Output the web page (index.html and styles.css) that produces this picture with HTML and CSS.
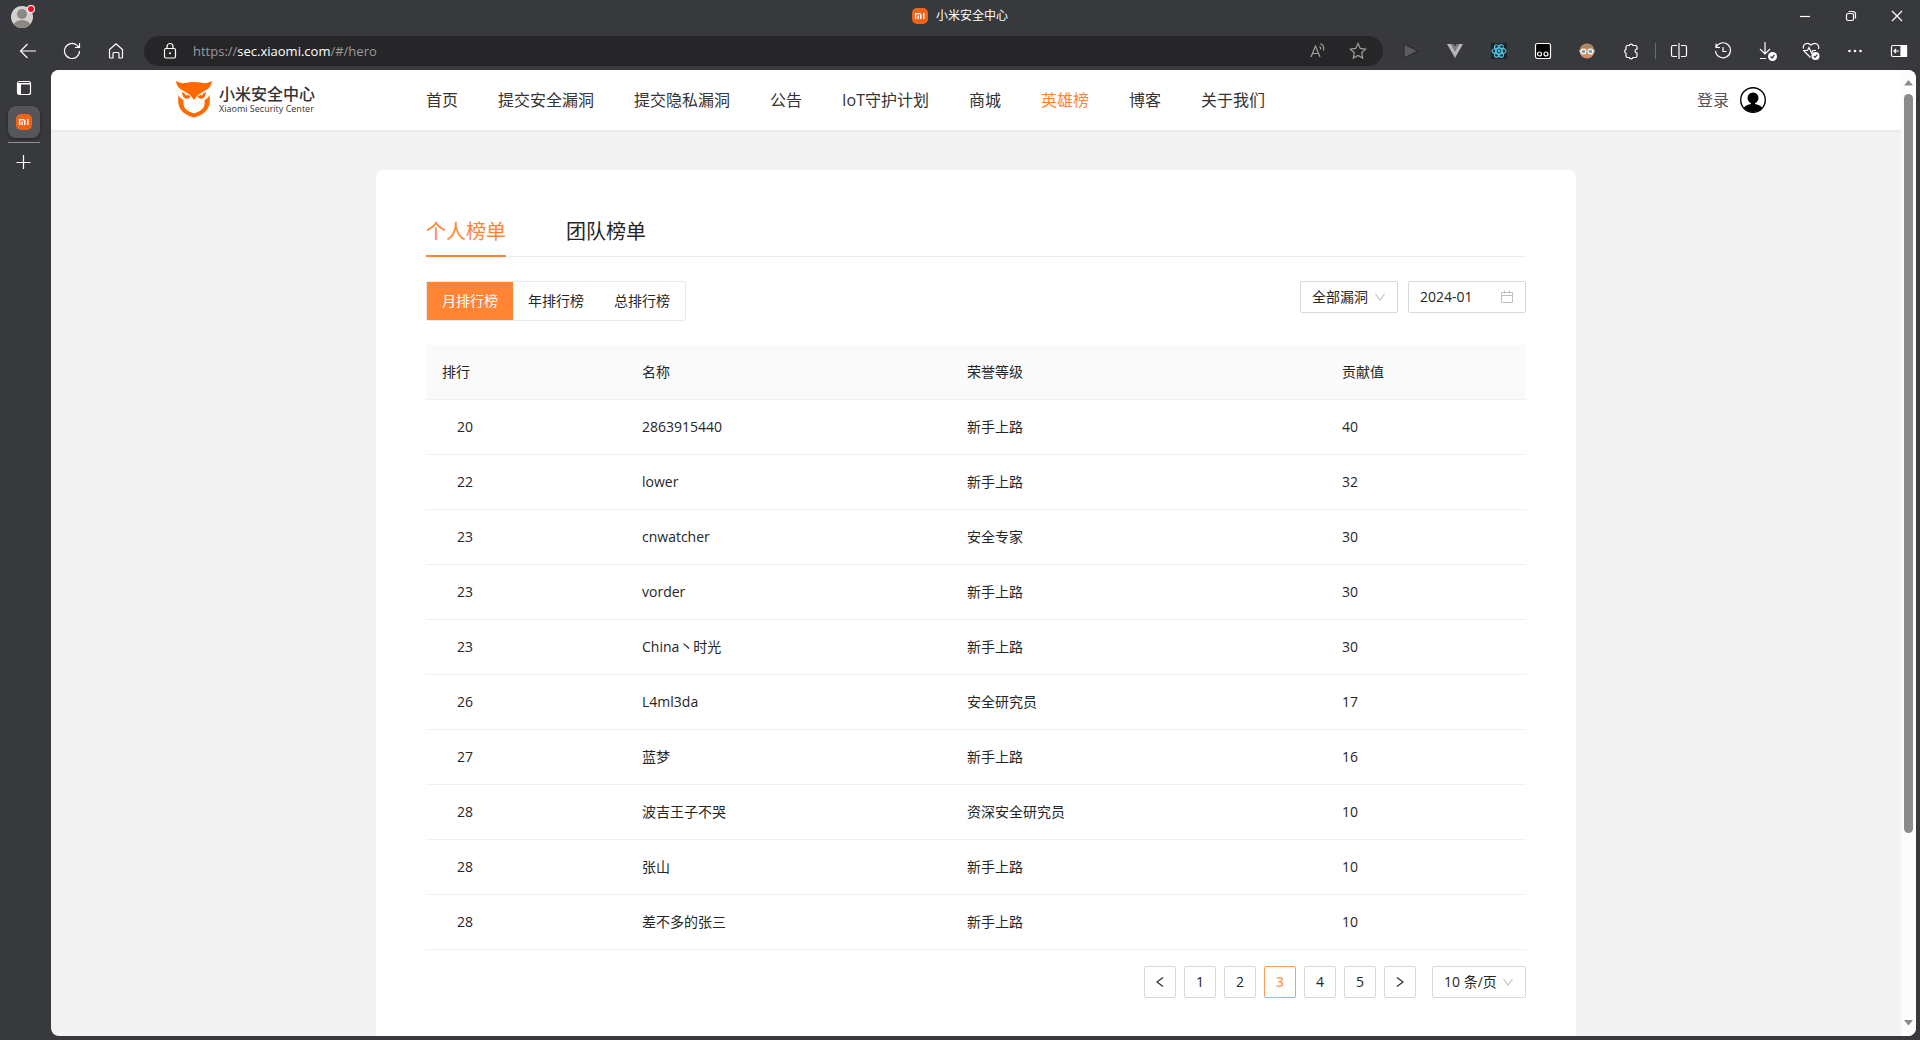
FILE: index.html
```html
<!DOCTYPE html>
<html lang="zh-CN">
<head>
<meta charset="utf-8">
<title>小米安全中心</title>
<link rel="stylesheet" href="styles.css">
</head>
<body>
<svg width="0" height="0" class="sprite" aria-hidden="true">
  <symbol id="mi" viewBox="0 0 16 16">
    <rect width="16" height="16" rx="5" fill="#f06418"/>
    <path d="M3.600 11V5.600h3.300c1.300 0 1.900.6 1.900 1.800V11M6.200 7.600V11M11.800 5V11" fill="none" stroke="#fff" stroke-width="1.400"/>
  </symbol>
  <symbol id="chevron" viewBox="0 0 12 12">
    <path d="M1.500 3l4.500 6 4.500-6" fill="none" stroke="#bfbfbf" stroke-width="1.100"/>
  </symbol>
</svg>
<div class="browser">
  <header class="titlebar">
    <button class="profile" aria-label="个人资料">
      <svg width="26" height="26" viewBox="0 0 26 26">
        <clipPath id="pc"><circle cx="12" cy="14" r="11"/></clipPath>
        <circle cx="12" cy="14" r="11" fill="#d3d1ce"/>
        <g clip-path="url(#pc)" fill="#8c8985"><circle cx="12" cy="11" r="5"/><ellipse cx="12" cy="24" rx="9" ry="7"/></g>
        <circle cx="21" cy="6" r="4" fill="#fff"/><circle cx="21" cy="6" r="3" fill="#e81123"/>
      </svg>
    </button>
    <div class="window-title"><svg width="16" height="16"><use href="#mi"/></svg><span>小米安全中心</span></div>
    <div class="window-controls">
      <button aria-label="最小化"><svg width="12" height="12" viewBox="0 0 12 12"><path d="M1 6.500h10"/></svg></button>
      <button aria-label="还原"><svg width="12" height="12" viewBox="0 0 12 12"><rect x="1.500" y="3.500" width="7" height="7" rx="1.500"/><path d="M3.500 1.500H8a2.500 2.500 0 0 1 2.500 2.500v4.500"/></svg></button>
      <button aria-label="关闭"><svg width="12" height="12" viewBox="0 0 12 12"><path d="M1 1l10 10M11 1L1 11"/></svg></button>
    </div>
  </header>

  <div class="toolbar">
    <div class="nav-buttons">
      <button aria-label="返回"><svg width="18" height="18" viewBox="0 0 18 18"><path d="M17 9H1.500M8.500 2L1.500 9l7 7"/></svg></button>
      <button aria-label="刷新"><svg width="18" height="18" viewBox="0 0 18 18"><path d="M16.500 9A7.500 7.500 0 1 1 14 3.400L16 5.500M16.500 1v4.500H12"/></svg></button>
      <button aria-label="主页"><svg width="18" height="18" viewBox="0 0 18 18"><path d="M2.500 7.500L9 1.700l6.500 5.800V15a1 1 0 0 1-1 1H12v-4.500a1 1 0 0 0-1-1H7a1 1 0 0 0-1 1V16H3.500a1 1 0 0 1-1-1z"/></svg></button>
    </div>
    <div class="address">
      <svg class="lock" width="18" height="18" viewBox="0 0 18 18"><rect x="3.500" y="6.500" width="11" height="9.500" rx="1.500"/><path d="M6 6.500V4.500a3 3 0 0 1 6 0v2"/><circle cx="9" cy="11.300" r="1" fill="#fff" stroke="none"/></svg>
      <a class="url" href="#/hero">https://<b>sec.xiaomi.com</b>/#/hero</a>
      <button aria-label="朗读"><svg width="18" height="18" viewBox="0 0 18 18"><path d="M2 15L6.500 4 11 15M3.500 11.500h6M10.500 4.500c1 .8 1.400 1.800 1.200 3M11.500 1.500c2.800 1.500 3.800 4 3 7"/></svg></button>
      <button aria-label="收藏"><svg width="18" height="18" viewBox="0 0 18 18"><path d="M9 1.500l2.300 4.900 5.300.7-3.900 3.700 1 5.300L9 13.500l-4.700 2.600 1-5.300L1.400 7.100l5.300-.7z"/></svg></button>
    </div>
    <div class="extensions">
      <button aria-label="播放"><svg width="18" height="18" viewBox="0 0 18 18"><path d="M2 2l14 7-14 7z" fill="#5c5c5e" stroke="#2c2c2e"/></svg></button>
      <button aria-label="Vue"><svg width="18" height="18" viewBox="0 0 18 18"><path d="M1 2h4l4 7 4-7h4L9 16z" fill="#b5b5b5" stroke="none"/><path d="M5 2h2.500L9 4.500 10.500 2H13L9 9z" fill="#7d7d7d" stroke="none"/></svg></button>
      <button aria-label="React"><svg width="18" height="18" viewBox="0 0 18 18"><rect x="1" y="1" width="16" height="16" fill="#20232a" stroke="none"/><g stroke="#53c1de"><ellipse cx="9" cy="9" rx="7" ry="2.800"/><ellipse cx="9" cy="9" rx="7" ry="2.800" transform="rotate(60 9 9)"/><ellipse cx="9" cy="9" rx="7" ry="2.800" transform="rotate(120 9 9)"/></g><circle cx="9" cy="9" r="1.400" fill="#53c1de" stroke="none"/></svg></button>
      <button aria-label="脚本"><svg width="18" height="18" viewBox="0 0 18 18"><rect x="1.500" y="1.500" width="15" height="15" rx="2" fill="#000"/><circle cx="5.500" cy="12" r="2"/><circle cx="12" cy="12" r="2"/></svg></button>
      <button aria-label="助手"><svg width="18" height="18" viewBox="0 0 18 18"><circle cx="9" cy="9" r="7.500" fill="#d98a5f" stroke="none"/><path d="M1.600 8.500a7.500 7.500 0 0 1 14.800 0L12 6H6z" fill="#a68a62" stroke="none"/><circle cx="5.500" cy="9.500" r="2.400" fill="#6ba8bf" stroke="#f4f4f4"/><circle cx="12.500" cy="9.500" r="2.400" fill="#6ba8bf" stroke="#f4f4f4"/><path d="M1.500 8.800h2M14.500 8.800h2" stroke="#f4f4f4"/></svg></button>
      <button aria-label="扩展"><svg width="18" height="18" viewBox="0 0 18 18"><path d="M4 5q0-1.500 1.500-1.500h1.700a2 2 0 0 1 3.800 0h2.500q1.500 0 1.500 1.500v2.200h-.6a2 2 0 0 0 0 3.800h.6V14q0 1.500-1.500 1.500H11a2 2 0 0 1-3.800 0H5.500Q4 15.500 4 14v-2.800a2 2 0 0 1 0-3.800z"/></svg></button>
    </div>
    <span class="divider"></span>
    <div class="extensions">
      <button aria-label="分屏"><svg width="18" height="18" viewBox="0 0 18 18"><path d="M7 3.500H3a1.500 1.500 0 0 0-1.500 1.500v8A1.500 1.500 0 0 0 3 14.500h4M11 3.500h4a1.500 1.500 0 0 1 1.500 1.500v8a1.500 1.500 0 0 1-1.500 1.500h-4M9 1v16"/></svg></button>
      <button aria-label="历史记录"><svg width="18" height="18" viewBox="0 0 18 18"><path d="M2 5.500A7.500 7.500 0 1 1 1.500 9M2 1.500v4h4M9 5v4.500h3.500"/></svg></button>
      <button aria-label="下载"><svg width="20" height="20" viewBox="0 0 20 20"><path d="M8 1v12M3 8l5 5 5-5M3 17.500h6"/><circle cx="15.500" cy="15.500" r="4.500" fill="#fff" stroke="none"/><path d="M13.500 15.500l1.500 1.500 2.500-3" stroke="#38393d"/></svg></button>
      <button aria-label="浏览器概要"><svg width="20" height="20" viewBox="0 0 20 20"><path d="M9.500 16.500L3 10M2.500 7.500C1.500 3 6.500.500 10 4.200 13.500.500 18.500 3 17.600 8M2 9.500h4.500l1.500-3 2.500 5.500 1.500-2.500h3"/><circle cx="14.500" cy="15" r="4" fill="#fff" stroke="none"/><path d="M12.800 15l1.300 1.300 2.200-2.600" stroke="#38393d"/></svg></button>
      <button aria-label="更多"><svg width="18" height="18" viewBox="0 0 18 18"><g fill="#fff" stroke="none"><circle cx="3.500" cy="9" r="1.300"/><circle cx="9" cy="9" r="1.300"/><circle cx="14.500" cy="9" r="1.300"/></g></svg></button>
      <button aria-label="侧栏"><svg width="18" height="18" viewBox="0 0 18 18"><rect x="1.500" y="3.500" width="15" height="11" rx="1.500"/><path d="M11 3.500h5.500v11H11z" fill="#fff"/><path d="M9 9H4M6 7L4 9l2 2"/></svg></button>
    </div>
  </div>

  <div class="workspace">
    <nav class="side-tabs" aria-label="标签页">
      <button aria-label="标签页操作"><svg width="16" height="16" viewBox="0 0 16 16"><rect x="1.500" y="1.500" width="13" height="13" rx="2"/><path d="M1.500 3v10q0 1.500 1.500 1.500h2V4.500h10V3z" fill="#fff" stroke="none"/></svg></button>
      <button class="current" aria-label="小米安全中心"><svg width="16" height="16"><use href="#mi"/></svg></button>
      <span class="rule"></span>
      <button aria-label="新建标签页"><svg width="16" height="16" viewBox="0 0 16 16"><path d="M7.500 1v14M.500 8.500h14"/></svg></button>
    </nav>

    <div class="viewport">
      <div class="page">
        <header class="site-header">
          <div class="site-inner">
            <a class="logo" href="#/">
              <svg width="36" height="38" viewBox="0 0 36 38" fill="#ff6900">
                <path d="M0 0C3 1.500 6 2.500 9 2c6-1.300 12-1.300 18 0 3 .5 6-.5 9-2-.5 4-2 6.500-5 8.500C26 11 21 14 18 19 15 14 10 11 5 8.500 2 6.500.500 4 0 0z"/>
                <path d="M2.500 14c1.500 3 3 4 5 5-1 8 3 11 10.500 13.500C25.500 30 29.500 27 28.500 19c2-1 3.500-2 5-5 1.500 12-2 18.500-15.500 22.500C4.500 32.500 1 26 2.500 14z"/>
                <path d="M6 11c.2 8 7 8 8.500 4.500l-3-1.700c-.5 1-2.300 1-2.500-1.300zM30 11c-.2 8-7 8-8.500 4.500l3-1.700c.5 1 2.300 1 2.500-1.300z"/>
              </svg>
              <span class="logo-text"><strong>小米安全中心</strong><small>Xiaomi Security Center</small></span>
            </a>
            <nav class="menu">
              <a href="#/">首页</a>
              <a href="#/submit">提交安全漏洞</a>
              <a href="#/privacy">提交隐私漏洞</a>
              <a href="#/notice">公告</a>
              <a href="#/iot">IoT守护计划</a>
              <a href="#/shop">商城</a>
              <a href="#/hero" class="active">英雄榜</a>
              <a href="#/blog">博客</a>
              <a href="#/about">关于我们</a>
            </nav>
            <a class="login" href="#/login">登录
              <svg width="26" height="26" viewBox="0 0 26 26"><clipPath id="uc"><circle cx="13" cy="13" r="12"/></clipPath><g clip-path="url(#uc)"><circle cx="13" cy="11" r="5.500"/><path d="M11 15h4v2c6 1.500 8 3 9 9H2c1-6 3-7.500 9-9z"/></g><circle cx="13" cy="13" r="12.300" fill="none" stroke="#000" stroke-width="1.400"/></svg>
            </a>
          </div>
        </header>

        <main class="card">
          <div class="tabs" role="tablist">
            <button role="tab" aria-selected="true">个人榜单</button>
            <button role="tab" aria-selected="false">团队榜单</button>
          </div>
          <div class="filters">
            <div class="segments">
              <button class="on">月排行榜</button>
              <button>年排行榜</button>
              <button>总排行榜</button>
            </div>
            <div class="pickers">
              <label class="field field-type">
                <select aria-label="漏洞类型"><option>全部漏洞</option></select>
                <svg width="12" height="12"><use href="#chevron"/></svg>
              </label>
              <label class="field field-month">
                <input type="text" value="2024-01" aria-label="月份">
                <svg width="14" height="14" viewBox="0 0 14 14" fill="none" stroke="#bfbfbf"><path d="M1.500 2.500h11v10h-11zM1.500 5.500h11M4.500.500v3M9.500.500v3"/></svg>
              </label>
            </div>
          </div>
          <table class="ranking">
            <colgroup><col class="c-rank"><col class="c-name"><col class="c-level"><col class="c-score"></colgroup>
            <thead><tr><th>排行</th><th>名称</th><th>荣誉等级</th><th>贡献值</th></tr></thead>
            <tbody>
              <tr><td>20</td><td>2863915440</td><td>新手上路</td><td>40</td></tr>
              <tr><td>22</td><td>lower</td><td>新手上路</td><td>32</td></tr>
              <tr><td>23</td><td>cnwatcher</td><td>安全专家</td><td>30</td></tr>
              <tr><td>23</td><td>vorder</td><td>新手上路</td><td>30</td></tr>
              <tr><td>23</td><td>China丶时光</td><td>新手上路</td><td>30</td></tr>
              <tr><td>26</td><td>L4ml3da</td><td>安全研究员</td><td>17</td></tr>
              <tr><td>27</td><td>蓝梦</td><td>新手上路</td><td>16</td></tr>
              <tr><td>28</td><td>波吉王子不哭</td><td>资深安全研究员</td><td>10</td></tr>
              <tr><td>28</td><td>张山</td><td>新手上路</td><td>10</td></tr>
              <tr><td>28</td><td>差不多的张三</td><td>新手上路</td><td>10</td></tr>
            </tbody>
          </table>
          <nav class="pagination" aria-label="分页">
            <button aria-label="上一页"><svg width="12" height="12" viewBox="0 0 12 12"><path d="M9 1.500L3 6l6 4.500"/></svg></button>
            <button>1</button>
            <button>2</button>
            <button class="on">3</button>
            <button>4</button>
            <button>5</button>
            <button aria-label="下一页"><svg width="12" height="12" viewBox="0 0 12 12"><path d="M3 1.500L9 6l-6 4.500"/></svg></button>
            <label class="field field-size">
              <select aria-label="每页条数"><option>10 条/页</option></select>
              <svg width="12" height="12"><use href="#chevron"/></svg>
            </label>
          </nav>
        </main>
      </div>
      <div class="scrollbar" aria-hidden="true">
        <svg width="9" height="6" viewBox="0 0 9 6"><path d="M4.500 0L9 5.500H0z"/></svg>
        <div class="track"><div class="thumb"></div></div>
        <svg width="9" height="6" viewBox="0 0 9 6"><path d="M4.500 5.500L9 0H0z"/></svg>
      </div>
    </div>
  </div>
</div>
</body>
</html>
```
FILE: styles.css
```css
* { box-sizing: border-box; }

body {
  margin: 0;
  font: 14px/22px "Open Sans", "Noto Sans CJK SC", sans-serif;
  color: #262626;
}

button, select, input { font: inherit; color: inherit; }

button {
  margin: 0;
  padding: 0;
  border: 0;
  background: none;
  cursor: pointer;
}

a { color: inherit; text-decoration: none; }
svg { display: block; flex: none; }
.sprite { position: absolute; }

/* Browser window */
.browser {
  display: flex;
  flex-direction: column;
  height: 100vh;
  overflow: hidden;
  background: #38393d;
}

.titlebar {
  display: grid;
  grid-template-columns: 1fr auto 1fr;
  align-items: center;
  height: 32px;
  flex: none;
}

.profile { justify-self: start; padding-left: 10px; }

.window-title {
  display: flex;
  align-items: center;
  gap: 8px;
  font-size: 12px;
  line-height: 16px;
  color: #fff;
}

.window-controls { display: flex; justify-content: flex-end; }

.window-controls button {
  display: grid;
  place-items: center;
  width: 46px;
  height: 32px;
}

.titlebar .window-controls svg,
.toolbar svg,
.side-tabs svg {
  fill: none;
  stroke: #fff;
  stroke-width: 1.2;
}

.side-tabs .current svg { stroke: none; }

.toolbar {
  display: flex;
  align-items: center;
  height: 38px;
  flex: none;
}

.nav-buttons, .extensions { display: flex; }
.nav-buttons { padding: 0 6px; }

.toolbar button {
  display: grid;
  place-items: center;
  width: 44px;
  height: 30px;
}

.address {
  display: flex;
  align-items: center;
  flex: 1;
  height: 30px;
  padding: 0 5px 0 17px;
  border-radius: 15px;
  background: #262628;
}

.toolbar .address button { width: 40px; }
.toolbar .address button svg { stroke: #a0a0a0; }
.url { flex: 1; margin-left: 14px; color: #9a9a9a; font-size: 13px; }
.url b { font-weight: 400; color: #fff; }
.address + .extensions { padding-left: 6px; }
.divider { width: 1px; height: 16px; margin: 0 1px 0 2px; background: #6b6c70; }
.divider + .extensions button:last-child { width: 43px; }

.workspace {
  display: flex;
  flex: 1;
  min-height: 0;
  padding: 0 4px 4px 0;
}

.side-tabs {
  display: flex;
  flex-direction: column;
  align-items: center;
  width: 51px;
  padding: 2px 3px 0 0;
  flex: none;
}

.side-tabs button {
  display: grid;
  place-items: center;
  width: 32px;
  height: 32px;
}

.side-tabs .current {
  margin: 2px 0 4px;
  border-radius: 8px;
  background: #55565c;
  box-shadow: 0 1px 3px #222226;
}

.rule { width: 32px; height: 1px; margin-bottom: 3px; background: #909094; }

.viewport {
  display: flex;
  flex: 1;
  min-width: 0;
  border-radius: 8px;
  overflow: hidden;
  background: #f3f3f3;
}

.page { flex: 1; min-width: 0; overflow: hidden; }

.scrollbar {
  display: flex;
  flex-direction: column;
  align-items: center;
  width: 15px;
  padding: 10px 0;
  gap: 8px;
  background: #fcfcfc;
  fill: #8b8b8b;
}

.track { flex: 1; width: 9px; }
.thumb { height: 80.5%; border-radius: 5px; background: #8b8b8b; }

/* Site header */
.site-header { background: #fff; box-shadow: 0 1px 4px #00000010; }

.site-inner {
  display: flex;
  align-items: center;
  max-width: 1600px;
  height: 60px;
  margin: 0 auto;
  padding-right: 10px;
  font-size: 16px;
  color: #333;
}

.logo { display: flex; align-items: center; gap: 7px; width: 250px; flex: none; }
.logo-text { display: flex; flex-direction: column; }
.logo-text strong { font-size: 16px; line-height: 18px; font-weight: 500; }
.logo-text small { font: 500 9px/12px "Open Sans", sans-serif; }
.menu { display: flex; gap: 40px; flex: 1; white-space: nowrap; }
.menu .active { color: #ff8534; }
.login { display: flex; align-items: center; gap: 11px; color: #555; }

/* Ranking card */
.card {
  max-width: 1200px;
  margin: 40px auto 0;
  padding: 40px 50px 80px;
  border-radius: 8px;
  background: #fff;
}

.tabs {
  display: flex;
  gap: 60px;
  border-bottom: 1px solid #ececec;
}

.tabs button {
  height: 47px;
  margin-bottom: -1px;
  padding-bottom: 2px;
  border-bottom: 2px solid transparent;
  font-size: 20px;
  line-height: 30px;
}

.tabs [aria-selected="true"] { color: #ff8534; border-color: #ff8534; }

.filters {
  display: flex;
  justify-content: space-between;
  align-items: flex-start;
  margin: 24px 0;
}

.segments { display: flex; border: 1px solid #e8e8e8; border-radius: 2px; }
.segments button { width: 86px; height: 38px; }
.segments .on { color: #fff; background: #ff8534; }
.pickers { display: flex; gap: 10px; }

.field {
  display: flex;
  align-items: center;
  height: 32px;
  padding: 0 11px;
  border: 1px solid #d9d9d9;
  border-radius: 2px;
}

.field select, .field input {
  appearance: none;
  flex: 1;
  min-width: 0;
  margin: 0;
  padding: 0;
  border: 0;
  outline: 0;
  background: none;
}

.field-type { width: 98px; }
.field-month { width: 118px; }
.field-size { width: 94px; margin-left: 8px; }

.ranking {
  width: 100%;
  border-collapse: separate;
  border-spacing: 0;
  table-layout: fixed;
}

.c-rank, .c-score { width: 200px; }
.c-name { width: 325px; }
.c-level { width: 375px; }

.ranking th, .ranking td {
  height: 55px;
  padding: 0 16px;
  border-bottom: 1px solid #f0f0f0;
  text-align: left;
  font-weight: 400;
}

.ranking th { background: #fafafa; }
.ranking td:first-child { padding-left: 31px; }

.pagination { display: flex; justify-content: flex-end; gap: 8px; margin-top: 16px; }

.pagination button {
  display: grid;
  place-items: center;
  width: 32px;
  height: 32px;
  border: 1px solid #d9d9d9;
  border-radius: 2px;
}

.pagination button svg { fill: none; stroke: #262626; stroke-width: 1.1; }
.pagination .on { border-color: #ff9d5c; color: #ff9d5c; font-weight: 600; }
```
